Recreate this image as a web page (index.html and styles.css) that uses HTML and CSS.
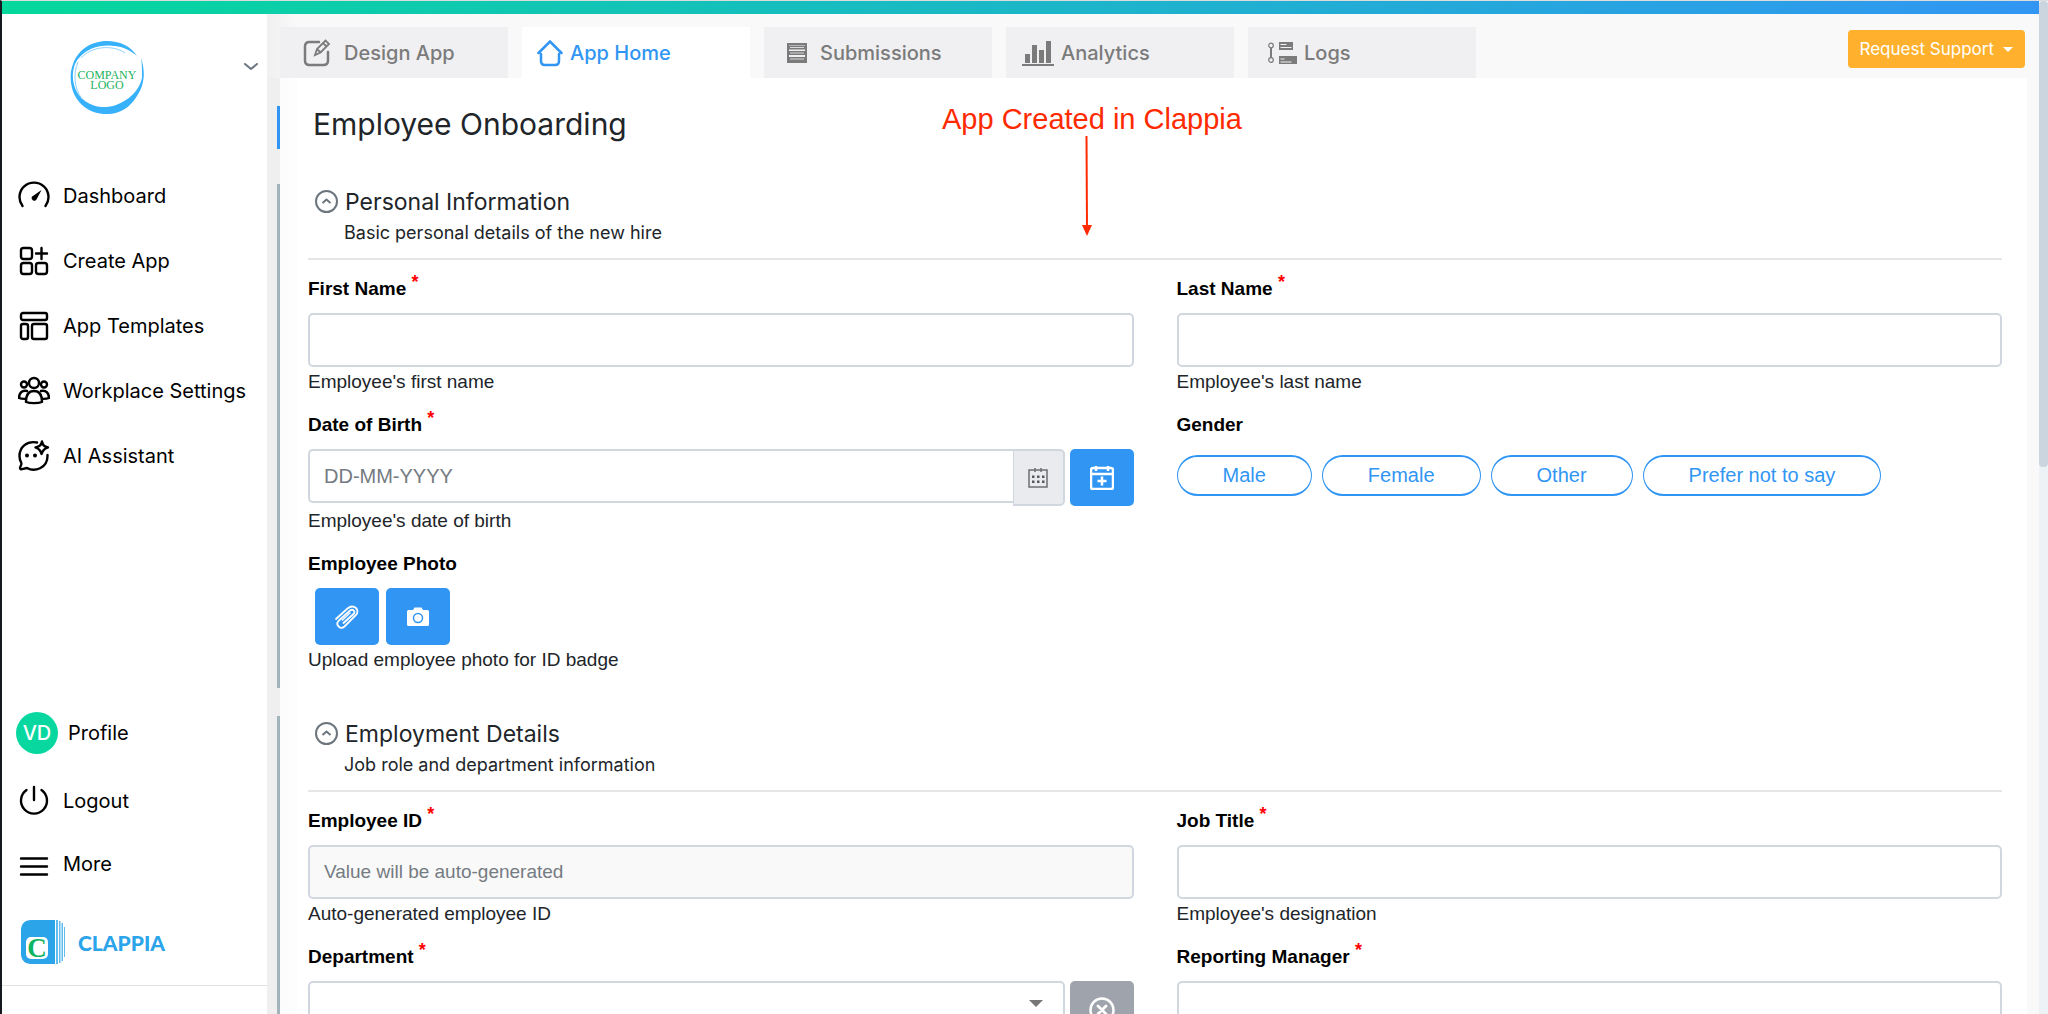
FILE: index.html
```html
<!DOCTYPE html>
<html lang="en">
<head>
  <meta charset="UTF-8">
  <meta name="viewport" content="width=device-width, initial-scale=1">
  <title>Employee Onboarding</title>
  <link rel="stylesheet" href="styles.css">
</head>
<body>
  <div class="page">
    <div class="window">
      <div class="top-bar"></div>
      <div class="layout">
        <!-- sidebar -->
        <aside class="sidebar">
          <div class="workplace">
            <svg class="company-logo" viewBox="0 0 74 76" role="img" aria-label="Company logo">
              <path d="M3 24C8 10 21 1 37 1c12 0 24 5 30 15-8-7-18-11-30-10C23 6 11 12 5 24 0 38 4 53 15 61c8 6 20 8 31 4 13-5 23-14 26-27 0-8 0-14-1-20 5 15 3 28-4 38-7 12-19 19-31 18C20 74 6 64 2 48 0 40 0 32 3 24z" fill="#38b1fb"/>
              <path d="M14 16C25 7 42 5 54 12M20 10c10-5 22-5 32-1" fill="none" stroke="#fff" stroke-width="1"/>
              <path d="M8 22C3 34 4 48 12 59M11 18C24 4 46 6 55 13" fill="none" stroke="#8ed2fb" stroke-width="1"/>
              <text x="37" y="39" text-anchor="middle" class="logo-text">COMPANY</text>
              <text x="37" y="49" text-anchor="middle" class="logo-text">LOGO</text>
            </svg>
            <button type="button" class="chevron" aria-label="Switch workplace">
              <svg width="14" height="8" viewBox="0 0 14 8"><path d="M1 1l6 5 6-5" fill="none" stroke="#6b7680" stroke-width="2" stroke-linecap="round" stroke-linejoin="round"/></svg>
            </button>
          </div>
          <nav class="side-nav">
            <a href="#">
              <svg viewBox="0 0 32 32"><path d="M4.500 26A14.500 14.500 0 1 1 27.500 26" fill="none"/><path d="M23.500 10l-5 9.500a2.600 2.600 0 1 1-4.300-3z" class="fill"/></svg>
              Dashboard</a>
            <a href="#">
              <svg viewBox="0 0 32 32"><rect x="3" y="3" width="11" height="11" rx="2.500"/><rect x="3" y="18" width="11" height="11" rx="2.500"/><rect x="18" y="18" width="11" height="11" rx="2.500"/><path d="M23.500 3v11M18 8.500h11"/></svg>
              Create App</a>
            <a href="#">
              <svg viewBox="0 0 32 32"><rect x="3" y="3" width="26" height="7" rx="2"/><rect x="3" y="14" width="7" height="15" rx="2"/><rect x="14" y="14" width="15" height="15" rx="2"/></svg>
              App Templates</a>
            <a href="#">
              <svg viewBox="0 0 32 32"><circle cx="16" cy="8" r="5"/><circle cx="6" cy="9.500" r="3"/><circle cx="26" cy="9.500" r="3"/><path d="M8 27c0-7 2.500-11 8-11s8 4 8 11c-4 1.500-12 1.500-16 0z"/><path d="M9 16c-5-1-8 2-8 7 2 .8 4 1 7 .8M23 16c5-1 8 2 8 7-2 .8-4 1-7 .8"/></svg>
              Workplace Settings</a>
            <a href="#">
              <svg viewBox="0 0 32 32"><path d="M19 2.500C9 .5 1.500 7 1.500 16c0 3 .8 5 1.800 7 .6 1.500-1 3-1.300 5 0 1 1 1.500 2 1.200l5-1.200c7 4 21 1 20.500-13"/><path d="M24 1.500c1 4 2 5 6 6-4 1.500-5 2.500-6.500 6.500-1-4-2.500-5-6-6.500 4-1 5.500-2 6.500-6z"/><circle cx="9" cy="15.500" r="2" class="dot"/><circle cx="17" cy="15.500" r="2" class="dot"/></svg>
              AI Assistant</a>
          </nav>
          <nav class="side-nav side-bottom">
            <a href="#" class="profile"><span class="avatar">VD</span>Profile</a>
            <a href="#">
              <svg viewBox="0 0 32 32"><path d="M8.500 5A13 13 0 1 0 23.500 5M16 2v13"/></svg>
              Logout</a>
            <a href="#" class="more">
              <svg viewBox="0 0 32 32"><path d="M3 10.500h26M3 18.500h26M3 26.500h26"/></svg>
              More</a>
          </nav>
          <a href="#" class="brand">
            <svg width="44" height="44" viewBox="0 0 44 44">
              <path d="M10 0h24v44H10C4 44 0 40 0 34V10C0 4 4 0 10 0z" fill="#2ba4e9"/>
              <path d="M35 0h2v44h-2zM38 1h1.500v42H38zM40.500 3H42v38h-1.500zM43 7h1v30h-1z" fill="#2ba4e9" opacity=".75"/>
              <rect x="5" y="17" width="22" height="22" rx="5" fill="#fff"/>
              <text x="16" y="37" text-anchor="middle" class="brand-letter">C</text>
            </svg>
            CLAPPIA</a>
        </aside>

        <!-- app content -->
        <main class="content">
          <header class="app-header">
            <nav class="tabs">
              <a href="#" class="tab tab-design">
                <svg width="28" height="28" viewBox="0 0 28 28"><path d="M16 3H6.500Q2 3 2 7.500v14Q2 26 6.500 26h14q4.500 0 4.500-4.500V13" fill="none" stroke="currentColor" stroke-width="2.500" stroke-linecap="round"/><path d="M12 16l2-6 8.500-8.500 3.500 3.500-8.500 8.500zM20 4l3.500 3.500M14 10l3.500 3.500" fill="none" stroke="currentColor" stroke-width="1.800"/></svg>
                Design App</a>
              <a href="#" class="tab active">
                <svg width="26" height="28" viewBox="0 0 26 28"><path d="M1.500 14L13 2.500 24.500 14M4 15v7q0 4 4 4h10q4 0 4-4v-7" fill="none" stroke="currentColor" stroke-width="2.500" stroke-linecap="round"/></svg>
                App Home</a>
              <a href="#" class="tab tab-submissions">
                <svg width="20" height="20" viewBox="0 0 20 20"><rect x="1" y="1" width="18" height="18" fill="none" stroke="currentColor" stroke-width="2"/><path d="M1 4.500h18M1 10h18M1 16h18" stroke="currentColor" stroke-width="4"/><path d="M3 4.500h14M3 10h14M3 16h14" stroke="#f0f0f2" stroke-width=".8"/></svg>
                Submissions</a>
              <a href="#" class="tab tab-analytics">
                <svg width="32" height="28" viewBox="0 0 32 28"><path d="M3 15h5v9H3zM10 6h5v18h-5zM17 11h5v13h-5zM24 2h5v22h-5zM0 25h32v2H0z" fill="currentColor"/></svg>
                Analytics</a>
              <a href="#" class="tab tab-logs">
                <svg width="29" height="22" viewBox="0 0 29 22"><circle cx="3" cy="3.500" r="2.300" fill="none" stroke="currentColor" stroke-width="1.200"/><circle cx="3" cy="18" r="2.300" fill="none" stroke="currentColor" stroke-width="1.200"/><path d="M3 6v9.500" stroke="currentColor" stroke-width="2"/><path d="M11 0h14v8H11zM11 14h18v8H11z" fill="currentColor"/><path d="M12.500 2.500h6M12.500 5.500h11M12.500 17h4M12.500 20h11" stroke="#f0f0f2" stroke-width="1"/></svg>
                Logs</a>
            </nav>
            <button type="button" class="support">Request Support</button>
          </header>

          <div class="form-area">
            <div class="note">
              <span>App Created in Clappia</span>
              <svg width="12" height="100" viewBox="0 0 12 100"><path d="M5.500 0L6 92" stroke="#ff2a00" stroke-width="2"/><path d="M1 89h10L6 100z" fill="#ff2a00"/></svg>
            </div>

            <h1 class="form-title">Employee Onboarding</h1>

            <form>
              <section class="section">
                <div class="section-head">
                  <svg width="23" height="23" viewBox="0 0 23 23"><circle cx="11.500" cy="11.500" r="10.500"/><path d="M7.500 13l4-3.500 4 3.500"/></svg>
                  <h2>Personal Information</h2>
                </div>
                <p class="section-text">Basic personal details of the new hire</p>
                <div class="fields">
                  <div class="field">
                    <label for="firstName">First Name <sup>*</sup></label>
                    <input type="text" id="firstName">
                    <p>Employee's first name</p>
                  </div>
                  <div class="field">
                    <label for="lastName">Last Name <sup>*</sup></label>
                    <input type="text" id="lastName">
                    <p>Employee's last name</p>
                  </div>
                  <div class="field">
                    <label for="birth">Date of Birth <sup>*</sup></label>
                    <div class="input-row">
                      <div class="date-group">
                        <input type="text" id="birth" class="date" placeholder="DD-MM-YYYY">
                        <button type="button" class="addon" aria-label="Open calendar">
                          <svg width="20" height="20" viewBox="0 0 20 20"><path d="M1 2h18v17H1zM7 0v4M13 0v4" fill="none" stroke="#6c6f73" stroke-width="1.500"/><path d="M4 7.500h2.500V10H4zM9 7.500h2.500V10H9zM14 7.500h2.500V10H14zM4 12.500h2.500V15H4zM9 12.500h2.500V15H9zM14 12.500h2.500V15H14z" fill="#55585c"/></svg>
                        </button>
                      </div>
                      <button type="button" class="square" aria-label="Today">
                        <svg width="24" height="24" viewBox="0 0 24 24"><rect x="1" y="2" width="22" height="21" rx="2" fill="none" stroke="#fff" stroke-width="2.500"/><path d="M1 8h22M6 0v5M18 0v5M12 10.500v9M7.500 15h9" stroke="#fff" stroke-width="2.500"/></svg>
                      </button>
                    </div>
                    <p>Employee's date of birth</p>
                  </div>
                  <div class="field">
                    <span class="label" id="gender">Gender</span>
                    <div class="pills" role="group" aria-labelledby="gender">
                      <button type="button">Male</button>
                      <button type="button">Female</button>
                      <button type="button">Other</button>
                      <button type="button">Prefer not to say</button>
                    </div>
                  </div>
                  <div class="field">
                    <span class="label">Employee Photo</span>
                    <div class="upload-row">
                      <button type="button" class="square" aria-label="Attach file">
                        <svg width="24" height="24" viewBox="0 0 24 24"><path d="M1 14L12.500 3.500c6-5 13 1 8.500 6.500L9.500 21.500c-4 3.500-9.500-1.500-6-5.500L15 5.500c3-2 6 1 3.500 3.500l-10 9" fill="none" stroke="#fff" stroke-width="1.800" stroke-linecap="round"/><path d="M7 15.500l8.500-8" fill="none" stroke="#fff" stroke-width="1.200"/></svg>
                      </button>
                      <button type="button" class="square" aria-label="Take photo">
                        <svg width="24" height="20" viewBox="0 0 24 20"><path d="M2.500 3H7l1.500-2.500h7L17 3h4.500q1.500 0 1.500 1.500v13q0 1.500-1.500 1.500h-19Q1 19 1 17.500v-13Q1 3 2.500 3z" fill="#fff"/><circle cx="12" cy="11" r="4.500" fill="none" stroke="#3196f3" stroke-width="1.500"/></svg>
                      </button>
                    </div>
                    <p>Upload employee photo for ID badge</p>
                  </div>
                </div>
              </section>

              <section class="section">
                <div class="section-head">
                  <svg width="23" height="23" viewBox="0 0 23 23"><circle cx="11.500" cy="11.500" r="10.500"/><path d="M7.500 13l4-3.500 4 3.500"/></svg>
                  <h2>Employment Details</h2>
                </div>
                <p class="section-text">Job role and department information</p>
                <div class="fields">
                  <div class="field">
                    <label for="employeeId">Employee ID <sup>*</sup></label>
                    <input type="text" id="employeeId" placeholder="Value will be auto-generated" disabled>
                    <p>Auto-generated employee ID</p>
                  </div>
                  <div class="field">
                    <label for="jobTitle">Job Title <sup>*</sup></label>
                    <input type="text" id="jobTitle">
                    <p>Employee's designation</p>
                  </div>
                  <div class="field">
                    <label for="department">Department <sup>*</sup></label>
                    <div class="input-row">
                      <div class="select-box">
                        <select id="department"><option></option></select>
                      </div>
                      <button type="button" class="square clear" aria-label="Clear department">
                        <svg width="26" height="26" viewBox="0 0 26 26"><circle cx="13" cy="13" r="11.500" fill="none" stroke="#fff" stroke-width="2.500"/><path d="M9 9l8 8M17 9l-8 8" stroke="#fff" stroke-width="2.800" stroke-linecap="round"/></svg>
                      </button>
                    </div>
                  </div>
                  <div class="field">
                    <label for="manager">Reporting Manager <sup>*</sup></label>
                    <input type="text" id="manager">
                  </div>
                </div>
              </section>
            </form>
          </div>
        </main>
      </div>
    </div>
    <div class="scroll-track"><div class="scroll-thumb"></div></div>
  </div>
</body>
</html>
```
FILE: styles.css
```css
* {
  box-sizing: border-box;
}
body {
  margin: 0;
  font-family: Inter, sans-serif;
  font-size: 20px;
  color: #212529;
}
h1, h2, p {
  margin: 0;
  font-weight: normal;
}
a {
  color: inherit;
  text-decoration: none;
}
button {
  border: 0;
  padding: 0;
  cursor: pointer;
}
.page {
  display: flex;
  height: 100vh;
  overflow: hidden;
  border-top: 1px solid #dcdcdc;
  border-left: 2px solid #16181f;
}
.window {
  flex: 1;
  min-width: 0;
  display: flex;
  flex-direction: column;
}
.top-bar {
  flex: none;
  height: 13px;
  background: linear-gradient(to right, #05d89c, #3196f3);
}
.layout {
  flex: 1;
  min-height: 0;
  display: flex;
}

/* sidebar */
.sidebar {
  flex: none;
  width: 265px;
  display: flex;
  flex-direction: column;
  padding-bottom: 28px;
  background: #fff;
  color: #000;
}
.workplace {
  display: flex;
  justify-content: space-between;
  align-items: flex-start;
  padding: 26px 9px 0 68px;
  height: 149px;
}
.company-logo {
  width: 74px;
  height: 76px;
}
.logo-text {
  font-family: "Liberation Serif", serif;
  font-size: 12px;
  fill: #22b35e;
}
.chevron {
  margin-top: 23px;
  background: none;
  line-height: 0;
}
.side-nav a {
  display: flex;
  align-items: center;
  gap: 13px;
  height: 65px;
  padding-left: 16px;
}
.side-nav svg {
  width: 32px;
  height: 32px;
  fill: none;
  stroke: #000;
  stroke-width: 2.4;
  stroke-linecap: round;
  stroke-linejoin: round;
}
.side-nav .fill {
  fill: #000;
  stroke: none;
}
.side-nav .dot {
  fill: #000;
  stroke: none;
}
.side-bottom {
  margin: auto 0 5px;
}
.side-nav .profile {
  gap: 10px;
  height: 70px;
  padding-left: 14px;
}
.side-nav .more {
  height: 62px;
}
.avatar {
  display: flex;
  align-items: center;
  justify-content: center;
  width: 42px;
  height: 42px;
  border-radius: 50%;
  background: #08d8a0;
  color: #fff;
  font-weight: 500;
}
.brand {
  display: flex;
  align-items: center;
  gap: 13px;
  padding: 20px 0 21px 19px;
  border-bottom: 1px solid #dee2e6;
  color: #2ba4e9;
  font-family: Lato, sans-serif;
  font-size: 21px;
  font-weight: 900;
}
.brand-letter {
  font-family: "Liberation Serif", serif;
  font-size: 27px;
  font-weight: bold;
  fill: #0db561;
}

/* content */
.content {
  flex: 1;
  min-width: 0;
  overflow: hidden;
  background: #f9f9f9;
}
.app-header {
  display: flex;
  justify-content: space-between;
  align-items: flex-start;
  padding: 13px 14px 0 13px;
  background: linear-gradient(to right, #f0f0f0, #f9f9f9 30px);
}
.tabs {
  display: flex;
  gap: 14px;
}
.tab {
  display: flex;
  align-items: center;
  gap: 7px;
  width: 228px;
  height: 51px;
  padding-left: 15px;
  background: #f0f0f2;
  color: #7b7b7b;
  font-weight: 500;
}
.tab.active {
  background: #fff;
  color: #3196f3;
}
.tab-design {
  gap: 13px;
  padding-left: 23px;
}
.tab-submissions {
  gap: 13px;
  padding-left: 23px;
}
.tab-analytics {
  padding-left: 16px;
}
.tab-logs {
  padding-left: 20px;
}
.support {
  display: flex;
  align-items: center;
  gap: 9px;
  height: 38px;
  margin-top: 3px;
  padding: 0 12px;
  border-radius: 4px;
  background: #ffb12d;
  color: #fff;
  font-family: Inter, sans-serif;
  font-size: 17px;
}
.support::after {
  content: "";
  border: 5px solid transparent;
  border-top-color: #fff;
  border-bottom: 0;
}
.form-area {
  position: relative;
  margin-right: 12px;
  padding: 28px 0 0 10px;
  background: linear-gradient(to right, #efefef 13px, #fcfcfc 13px, #fdfdfd 30px, #fff 30px);
}
.form-title {
  height: 43px;
  margin-bottom: 35px;
  padding-left: 33px;
  border-left: 3px solid #3196f3;
  font-size: 30px;
  line-height: 36px;
}
.note {
  position: absolute;
  top: 24px;
  left: 675px;
  display: flex;
  flex-direction: column;
  align-items: center;
  color: #ff2a00;
  font-family: "Liberation Sans", Arial, sans-serif;
  font-size: 29px;
  line-height: 34px;
}
.note svg {
  margin-right: 10px;
}
.section {
  margin-bottom: 28px;
  padding: 0 25px 14px 28px;
  border-left: 3px solid #a2b3bb;
}
.section-head {
  display: flex;
  align-items: center;
  gap: 7px;
  height: 35px;
  padding-left: 7px;
}
.section-head svg {
  fill: none;
  stroke: #6c757d;
  stroke-width: 2;
}
.section-head h2 {
  font-size: 23px;
}
.section-text {
  margin-bottom: 11px;
  padding-left: 36px;
  font-size: 18px;
  line-height: 28px;
}
.fields {
  display: grid;
  grid-template-columns: 1fr 1fr;
  gap: 15px 43px;
  padding-top: 15px;
  border-top: 2px solid #e5e6e8;
  font-family: "Liberation Sans", Arial, sans-serif;
}
.field label,
.field .label {
  display: block;
  margin-bottom: 10px;
  color: #000;
  font-size: 19px;
  font-weight: bold;
  line-height: 28px;
}
.field sup {
  color: #f00;
  font-size: 18px;
  line-height: 0;
}
.field p {
  padding-top: 1px;
  font-size: 19px;
  line-height: 28px;
}
.field input,
.field select {
  display: block;
  width: 100%;
  height: 54px;
  padding: 0 14px;
  border: 2px solid #d0d7de;
  border-radius: 5px;
  background: #fff;
  font-family: inherit;
  font-size: 20px;
}
.field input::placeholder {
  color: #757b82;
  opacity: 1;
}
.field input:disabled {
  background: #f9f9f9;
  font-size: 19px;
}
.input-row,
.upload-row {
  display: flex;
  gap: 5px;
}
.upload-row {
  gap: 7px;
  padding-left: 7px;
}
.date-group {
  flex: 1;
  display: flex;
}
.field .date {
  border-right: 0;
  border-radius: 5px 0 0 5px;
}
.addon {
  flex: none;
  width: 52px;
  height: 57px;
  border: 2px solid #d0d7de;
  border-left-width: 1px;
  border-radius: 0 5px 5px 0;
  background: #e9ebef;
}
.square {
  flex: none;
  width: 64px;
  height: 57px;
  border-radius: 5px;
  background: #3196f3;
}
.clear {
  background: #9fa4ac;
}
.addon svg,
.square svg {
  display: block;
  margin: 0 auto;
}
.select-box {
  position: relative;
  flex: 1;
}
.select-box select {
  appearance: none;
}
.select-box::after {
  content: "";
  position: absolute;
  top: 19px;
  right: 22px;
  border: 7px solid transparent;
  border-top-color: #777;
  border-bottom: 0;
}
.pills {
  display: flex;
  flex-wrap: wrap;
  gap: 10px;
  padding-top: 6px;
}
.pills button {
  height: 41px;
  padding: 0 45px;
  border: 1px solid #3196f3;
  border-width: 2px 1px;
  border-radius: 21px;
  background: #fff;
  color: #3196f3;
  font-family: inherit;
  font-size: 20px;
}

/* scrollbar */
.scroll-track {
  flex: none;
  width: 9px;
  background: #edf2f7;
}
.scroll-thumb {
  height: 46%;
  border-radius: 4px;
  background: #cbd5e0;
}
```
